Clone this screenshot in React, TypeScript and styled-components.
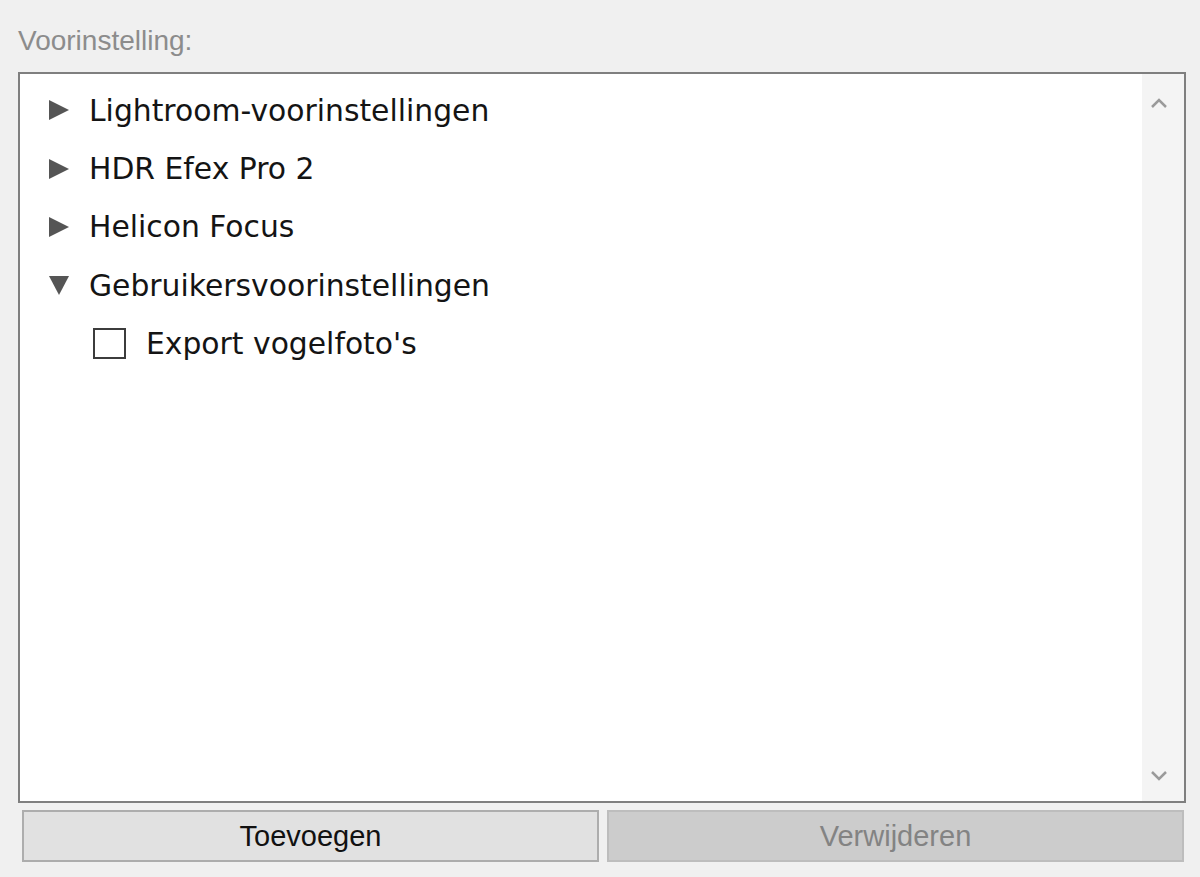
import styled, { createGlobalStyle } from "styled-components";

const GlobalStyle = createGlobalStyle`
  html, body {
    margin: 0;
    padding: 0;
    background: #f0f0f0;
  }
`;

const Dialog = styled.div`
  width: 1200px;
  height: 877px;
  box-sizing: border-box;
  padding: 24px 14px 0 18px;
  display: flex;
  flex-direction: column;
  font-family: "DejaVu Sans", Verdana, sans-serif;
`;

const Label = styled.div`
  font-family: "Liberation Sans", Arial, sans-serif;
  font-size: 28px;
  line-height: 34px;
  color: #8c8c8c;
  margin-bottom: 14px;
`;

const ListBox = styled.div`
  height: 731px;
  box-sizing: border-box;
  border: 2px solid #7f7f7f;
  background: #ffffff;
  display: flex;
`;

const Tree = styled.ul`
  flex: 1;
  list-style: none;
  margin: 0;
  padding: 7px 0 0 0;
`;

const Item = styled.li<{ $indent?: number }>`
  height: 58.4px;
  display: flex;
  align-items: center;
  padding-left: ${(p) => p.$indent ?? 28}px;
  font-size: 29.8px;
  color: #141414;
`;

const Arrow = styled.svg`
  width: 22px;
  height: 22px;
  margin-right: 19px;
  flex-shrink: 0;
`;

const Check = styled.span`
  width: 33px;
  height: 31px;
  box-sizing: border-box;
  border: 2px solid #3c3c3c;
  background: #fff;
  margin-right: 20px;
  flex-shrink: 0;
`;

const ScrollBar = styled.div`
  width: 42px;
  box-sizing: border-box;
  background: #f4f4f4;
  display: flex;
  flex-direction: column;
  justify-content: space-between;
  align-items: center;
  padding: 22px 8px 18px 0;
`;

const Chevron = styled.svg`
  width: 20px;
  height: 14px;
`;

const ButtonRow = styled.div`
  display: flex;
  gap: 8px;
  margin: 7px 2px 0 4px;
`;

const Button = styled.button<{ $disabled?: boolean }>`
  flex: 1;
  height: 52px;
  box-sizing: border-box;
  border: 2px solid ${(p) => (p.$disabled ? "#bdbdbd" : "#adadad")};
  background: ${(p) => (p.$disabled ? "#cccccc" : "#e1e1e1")};
  color: ${(p) => (p.$disabled ? "#838383" : "#111111")};
  font-family: "Liberation Sans", Arial, sans-serif;
  font-size: 29px;
  padding: 0;
`;

function RightArrow() {
  return (
    <Arrow viewBox="0 0 22 22">
      <polygon points="1,1 21,11 1,21" fill="#555" />
    </Arrow>
  );
}

function DownArrow() {
  return (
    <Arrow viewBox="0 0 22 22">
      <polygon points="1,2 21,2 11,21" fill="#555" />
    </Arrow>
  );
}

const groups = [
  { label: "Lightroom-voorinstellingen", open: false },
  { label: "HDR Efex Pro 2", open: false },
  { label: "Helicon Focus", open: false },
  { label: "Gebruikersvoorinstellingen", open: true },
];

export default function App() {
  return (
    <>
      <GlobalStyle />
      <Dialog>
        <Label>Voorinstelling:</Label>
        <ListBox>
          <Tree>
            {groups.map((g) => (
              <Item key={g.label}>
                {g.open ? <DownArrow /> : <RightArrow />}
                {g.label}
              </Item>
            ))}
            <Item $indent={73}>
              <Check />
              Export vogelfoto's
            </Item>
          </Tree>
          <ScrollBar>
            <Chevron viewBox="0 0 20 14">
              <polyline points="3,11 10,4 17,11" fill="none" stroke="#9a9a9a" strokeWidth="2.5" />
            </Chevron>
            <Chevron viewBox="0 0 20 14">
              <polyline points="3,3 10,10 17,3" fill="none" stroke="#9a9a9a" strokeWidth="2.5" />
            </Chevron>
          </ScrollBar>
        </ListBox>
        <ButtonRow>
          <Button>Toevoegen</Button>
          <Button $disabled disabled>
            Verwijderen
          </Button>
        </ButtonRow>
      </Dialog>
    </>
  );
}
